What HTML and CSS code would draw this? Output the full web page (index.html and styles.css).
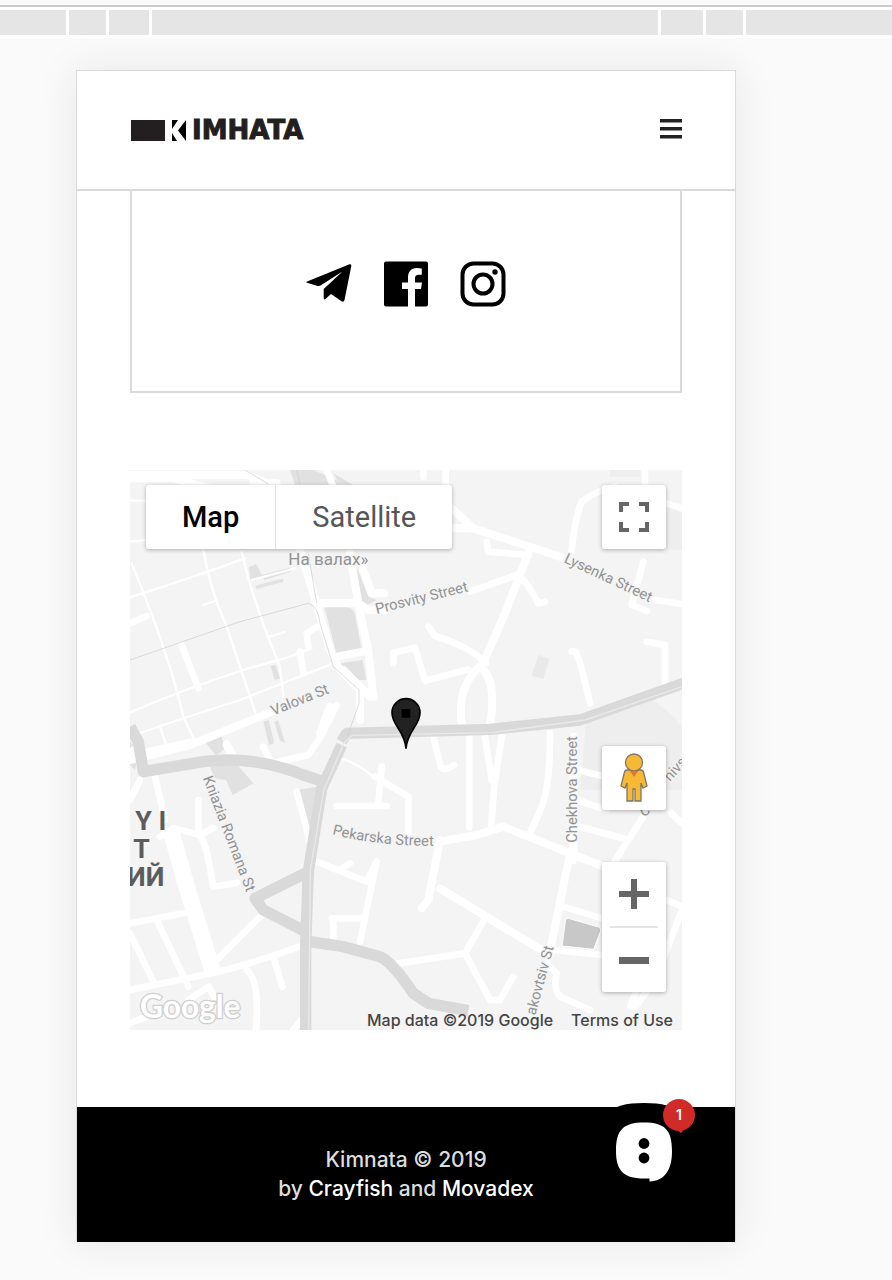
FILE: index.html
```html
<!DOCTYPE html>
<html lang="en">
<head>
<meta charset="utf-8">
<meta name="viewport" content="width=device-width, initial-scale=1">
<title>Kimnata</title>
<link rel="stylesheet" href="styles.css">
</head>
<body>
<div class="ruler"><span class="seg seg-a"></span><span class="seg seg-b"></span><span class="seg seg-c"></span><span class="seg seg-main"></span><span class="seg seg-d"></span><span class="seg seg-b"></span><span class="seg seg-e"></span></div>
<div class="stage">
<div class="device">
  <header class="header">
    <a class="logo" href="#" aria-label="Кімната">
      <svg class="logo-mark" viewBox="0 0 55 21" width="55" height="21" aria-hidden="true">
        <path fill="#231f20" d="M0 0h34v21H0z"/>
        <path fill="#000" d="M41 0h6l-6 9zM41 13l5 8h-5zM55 0v21L47 10.500z"/>
      </svg>
      <span class="logo-text">IMHATA</span>
    </a>
    <button class="menu" aria-label="Menu">
      <svg viewBox="0 0 22 20" width="22" height="20"><path fill="#222" d="M0 0h22v3.500H0zM0 8h22v3.500H0zM0 16h22v3.500H0z"/></svg>
    </button>
  </header>
  <main class="main">
    <nav class="social" aria-label="Social networks">
      <a href="#" aria-label="Telegram"><svg viewBox="0 0 46 46" width="46" height="46"><path d="M.500 20.800 43.500 3.300q2-.600 1.800 1.600L38.500 39q-.600 2.600-3 1.300l-10.500-7.200-5.500 5q-1.800 1.200-1.800-1.500v-8.500L36.500 10.500 14.500 24.600q-1.500.800-3 .300L1 21.800q-1-.400-.500-1z"/></svg></a>
      <a href="#" aria-label="Facebook"><svg viewBox="0 0 46 46" width="46" height="46"><path d="M3 .500h40q2 0 2 2v41q0 2-2 2H32V28h6l1-6.500h-7v-4c0-2.500 1.200-3.700 3.800-3.700h3V7.500q-2-.500-5-.500C28 7 25 11 25 16.500v5h-6V28h6v17.500H3q-2 0-2-2v-41q0-2 2-2z"/></svg></a>
      <a href="#" aria-label="Instagram"><svg viewBox="0 0 46 46" width="46" height="46"><g fill="none" stroke="#000" stroke-width="4"><rect x="2.500" y="2.500" width="41" height="41" rx="11"/><circle cx="23" cy="23" r="9.500"/></g><circle cx="35" cy="11" r="2.700"/></svg></a>
    </nav>
    <section class="map" aria-label="Map">
      <svg class="map-canvas" viewBox="0 0 1656 1680" preserveAspectRatio="xMidYMid slice">
        <defs><path id="pekarska" d="M606 1093Q750 1131 950 1127"/></defs>
        <path fill="#f4f4f4" d="M0 0h1656v1680H0z"/>
        <!-- blocks and squares -->
        <path fill="#eee" d="M1370 735 1560 685Q1640 740 1656 775V960H1350z M1610 100l46 30v110h-46z M1440 0h90v20h-90z"/>
        <g fill="#e1e1e1">
          <path d="M480 0h70l100 45H495zM610 10l60 35h-40z"/>
          <path d="M583 410h68q22 5 25 30l19 100-75 13zM630 580l68-10 10 60h-50l-25-30z"/>
          <path d="M680 290l35 90 25 10-35 18-20-20zM357 292l22-10 20 40-38 12zM395 315l80-22 8 12-80 25zM375 347l85-22v10l-80 22z"/>
          <path d="M422 588l14-4 14 42-16 4zM400 755l16-5 17 70-16 5zM433 755l12-4 20 68-16-8zM225 815l50-18 8 40-25 20z"/>
          <path d="M240 890l80-8 50 58-62 35-20-45-35-5zM500 960l62-10-8 165-30-45z"/>
          <path d="M0 815l25 25-10 60-15-15z"/>
        </g>
        <path fill="#e9e9e9" d="M1225 555l33 12-18 60-35-10z"/>
        <path fill="#c8c8c8" stroke="#fff" stroke-width="3" d="M1315 1345q-8 0-9 8l-10 75 95 10 21-55q2-9-6-12z"/>
        <g class="road thin">
          <path d="M0 382Q180 325 345 265M5 280Q120 560 160 740L200 825M220 240Q240 360 290 470L380 740M335 245Q370 400 450 590L460 680M0 727Q170 655 340 600L480 560 545 535M0 800Q170 740 330 690L610 580M0 215l50-5M0 92h50M220 405l35-12M420 500l45-14M90 770l20 60M365 330l130-35M600 860q80 10 140 70"/>
        </g>
        <g class="road">
          <path d="M0 460l50-22M155 525l50 130M510 545l10 65M535 530l-5-40 30-20"/>
          <path d="M90 1100l40-25 80 20 40-20M205 990v90l25 60 20 110 70-12M0 1360l160-30M0 1390l75 155M85 1360l90 190M245 1485l155-155M0 1560l220-45q140-30 300-90M430 1460l27 90M350 1500q40 30 28 180M175 1590l60-40 40 70M0 1660l60-25M490 1680l40-50M75 920l30 130M30 930l-30 60"/>
          <path d="M30 850l150-35M290 820l20 35M400 830l25 50 110-25 40-60 45-90"/>
          <path d="M790 580V548l65-15 30 100 130-35M895 470l20 28Q1020 530 1068 580M1175 325q20 20 50 75l20-5M1070 215l5 30 120 10M1325 545l10 0q10 0 45 155M1550 515l55 10v115M1540 275l-35 130 45 18M1020 365l140-50"/>
          <path d="M910 800l22 90q12 15 40-5M1018 800v270M1065 800l20 130M1115 800l-22 145-10 130M1260 790q0 160-25 220l-35 80M620 1008h150M745 1000l10-110M1345 900l80 20M1340 990l90 30M1350 1070l130 35"/>
          <path d="M560 1175l150 60 30-60-50 240M630 1200l30-20M605 1345h90M610 1350v65M735 920l100 60v110M805 1480l200-30 60-105M1005 1450l75 140h30l40-70M1250 1480l30 30q-10 50 10 70l90 40M500 965l40 150"/>
          <path d="M1300 1310l200 60M1270 1440l150 15M1610 1290l46 20M1656 1320l-80 210-60 80M1500 1610l20-50M1540 1040l-90 140M1625 1030l31 30"/>
          <path d="M1325 240q10-100 30-145 45-35 100-45M1545 0v50M1610 100l46 15M1575 390l81 12M590 0l20 50M880 0v20M947 0v50"/>
        </g>
        <g class="road wide">
          <path d="M0 25h130l160 45M0 15h350l90 35M510 240q50 160 90 300l30 60 60 60v90M640 600l80 80M660 250q30 190 55 290l15 140M565 400h120l30 20h50M620 560l80-15M700 300l25 70 38 0M0 850l30-25M0 870l180-45 210-85 60-25M290 825l20 40M600 710l-30 80M440 40h-70"/>
          <path d="M960 110l70 65 260 85M970 175h50M1195 250l-70 180-70 160M1055 585q-75 60-60 175M1060 600q40 40 20 165M930 1115l110-20 80-25 200 80 150 60M930 1110l-35 180-20 25M1320 1150l-55 270M1330 800v370M930 1255l180 110 150 90"/>
        </g>
        <path class="boulevard" d="M120 1075l50 175 80 260"/>
        <g class="main-road">
          <path d="M0 770l25 45 15 90 180-30q150-20 300 40l60 20M635 825l-60 130-40 250-8 220v260M635 815l15-25 430-12 270-28 310-110M525 1210l-150 75 25 35 127 65M540 1415l100 15 110 30q40 20 100 110l45 30 120 22"/>
        </g>
        <path fill="none" stroke="#e9e9e9" stroke-width="4" d="M1656 650l-290 100-280 38-420 8-25 25-60 140-40 240-5 480"/>
        <path fill="none" stroke="#ccc" stroke-width="2" d="M0 570l330-115 205-55q30 10 35 60l40 130 77 70v40l-35 100M535 250l25 150M345 0l70 42M500 0l10 42"/>
        <g class="label">
          <text x="475" y="285" font-size="51">На валах»</text>
          <text transform="translate(740 432) rotate(-14)">Prosvity Street</text>
          <text transform="translate(1300 276) rotate(25)">Lysenka Street</text>
          <text transform="translate(430 737) rotate(-22)">Valova St</text>
          <text transform="translate(218 924) rotate(69)">Kniazia Romana St</text>
          <text><textPath href="#pekarska">Pekarska Street</textPath></text>
          <text transform="translate(1342 1118) rotate(-90)">Chekhova Street</text>
          <text transform="translate(1216 1637) rotate(-75)">akovtsiv St</text>
          <text transform="translate(1620 936) rotate(-48)">nivs</text>
          <text transform="translate(1536 1040) rotate(-20)">C</text>
        </g>
        <g class="district">
          <text x="16" y="1081">Y I</text>
          <text x="10" y="1164">T</text>
          <text x="103" y="1248" text-anchor="end">ИЙ</text>
        </g>
        <text class="google" x="30" y="1644">Google</text>
        <g transform="translate(828 684)">
          <path fill="#222" stroke="#000" stroke-width="5" d="M0 152C-3 100-42 82-42 44A42 42 0 0 1 42 44C42 82 3 100 0 152z"/>
          <path d="M-13 33h26v26h-26z"/>
        </g>
      </svg>
      <div class="map-types">
        <button class="map-type is-active">Map</button>
        <button class="map-type">Satellite</button>
      </div>
      <div class="map-controls">
        <button class="control" aria-label="Toggle fullscreen view"><svg viewBox="0 0 30 30" width="30" height="30"><path fill="none" stroke="#666" stroke-width="4" d="M2 10V2h8M20 2h8v8M28 20v8h-8M10 28H2v-8"/></svg></button>
        <button class="control pegman" aria-label="Street View"><svg viewBox="0 0 28 50" width="28" height="50"><g fill="#f5b935" stroke="#807566" stroke-width="1.300"><path d="M7 17h14q2 0 2.500 2L27 33l-4 2-2-5v18h-6V36h-2v12H7V30l-2 5-4-2 3.500-14Q5 17 7 17z"/><circle cx="14" cy="9.500" r="8.500"/></g><path fill="#e47635" d="M9 17q5 2.500 10 0l-5 7z"/></svg></button>
        <div class="zoom">
          <button class="control flat" aria-label="Zoom in"><svg viewBox="0 0 30 30" width="30" height="30"><path fill="#666" d="M12 0h6v12h12v6H18v12h-6V18H0v-6h12z"/></svg></button>
          <span class="zoom-line"></span>
          <button class="control flat" aria-label="Zoom out"><svg viewBox="0 0 30 30" width="30" height="30"><path fill="#666" d="M0 12h30v7H0z"/></svg></button>
        </div>
      </div>
      <div class="map-credits"><span>Map data ©2019 Google</span><a href="#">Terms of Use</a></div>
    </section>
  </main>
  <footer class="footer">
    <p>Kimnata © 2019</p>
    <p>by <a href="#">Crayfish</a> and <a href="#">Movadex</a></p>
    <button class="chat" aria-label="Open chat, 1 new message">
      <svg viewBox="0 0 96 96" width="96" height="96"><path d="M48 0C84 0 96 12 96 48S84 96 48 96 0 84 0 48 12 0 48 0z"/><path fill="#fff" d="M48 19.500C69 19.500 76 27 76 48 76 68 68 78 53.500 78.500V75.500H48C27 75.500 20 67 20 48 20 27 27 19.500 48 19.500z"/><circle cx="48" cy="40.500" r="5.400"/><circle cx="48" cy="55" r="5.400"/></svg>
      <svg class="badge-shape" viewBox="0 0 32 35" width="32" height="35"><circle cx="16" cy="16" r="16" fill="#d02b28"/><path fill="#d02b28" d="M11 30q5 1 7 4.500 2-2 3-6z"/></svg>
      <span class="badge">1</span>
    </button>
  </footer>
</div>
</div>
</body>
</html>
```
FILE: styles.css
```css
* { box-sizing: border-box; }
body { margin: 0; padding-top: 5px; background: #fafafa; font-family: Inter, "Noto Sans", sans-serif; }
a { color: inherit; text-decoration: none; }
button { padding: 0; border: 0; background: none; color: inherit; font: inherit; cursor: pointer; }
svg { display: block; }

.ruler { display: flex; gap: 3px; height: 33px; padding: 3px 0; border-top: 2px solid #cbcbcb; background: #fff; }
.seg { background: #e5e5e5; }
.seg-a { width: 66px; }
.seg-b { width: 37px; }
.seg-c { width: 40px; }
.seg-d { width: 42px; }
.seg-e { width: 146px; }
.seg-main { flex: 1; }

.stage { padding: 32px 156px 38px 76px; }
.device { border: 1px solid #dadada; border-bottom: 0; background: #fff; box-shadow: 0 0 40px rgba(0, 0, 0, .08); }

.header { display: flex; align-items: center; justify-content: space-between; height: 120px; padding: 0 53px 0 54px; border-bottom: 2px solid #dadada; }
.logo { display: flex; align-items: center; gap: 6px; }
.logo-text { color: #231f20; font-family: "DejaVu Sans", sans-serif; font-size: 26px; font-weight: 700; line-height: 30px; -webkit-text-stroke: 1px #231f20; }
.menu { padding-bottom: 2px; }

.main { padding: 0 53px 77px; }
.social { display: flex; justify-content: center; gap: 31px; padding: 70px 0 84px; border: 2px solid #dadada; border-top: 0; }

.map { position: relative; margin-top: 77px; overflow: hidden; }
.map-canvas { width: 100%; height: auto; }
.road { fill: none; stroke: #fff; stroke-width: 20; stroke-linecap: round; stroke-linejoin: round; }
.thin { stroke-width: 7; }
.wide { stroke-width: 24; }
.boulevard { fill: none; stroke: #fff; stroke-width: 50; }
.main-road { fill: none; stroke: #d9d9d9; stroke-width: 34; stroke-linejoin: round; }
.label { fill: #929292; stroke: #f4f4f4; stroke-width: 6; paint-order: stroke; font-family: Roboto, sans-serif; font-size: 44px; }
.district { fill: #5c5c5c; font-family: Roboto, sans-serif; font-size: 80px; font-weight: 700; }
.google { fill: #fff; stroke: #d0d0d0; stroke-width: 8; paint-order: stroke; font-family: Lato, sans-serif; font-size: 95px; font-weight: 700; }

.map-types { position: absolute; top: 15px; left: 16px; display: flex; border-radius: 3px; background: #fff; box-shadow: 0 1px 4px rgba(0, 0, 0, .3); }
.map-type { height: 64px; padding: 0 36px; color: #565656; font-family: Roboto, sans-serif; font-size: 29px; }
.map-type + .map-type { border-left: 1px solid #e2e2e2; }
.map-type.is-active { color: #000; font-weight: 500; }

.map-controls { position: absolute; top: 15px; right: 16px; bottom: 38px; display: flex; flex-direction: column; }
.control { display: flex; align-items: center; justify-content: center; width: 64px; height: 64px; border-radius: 3px; background: #fff; box-shadow: 0 1px 4px rgba(0, 0, 0, .3); }
.pegman { margin: auto 0 52px; }
.zoom { border-radius: 3px; background: #fff; box-shadow: 0 1px 4px rgba(0, 0, 0, .3); }
.flat { box-shadow: none; }
.zoom-line { display: block; height: 2px; margin: 0 8px; background: #e4e4e4; }
.map-credits { position: absolute; right: 9px; bottom: 0; display: flex; gap: 18px; color: #444; font-size: 16px; font-weight: 500; line-height: 20px; white-space: nowrap; }

.footer { position: relative; padding: 38px 0 39px; background: #000; color: #ddd; font-size: 21px; font-weight: 500; line-height: 29px; text-align: center; }
.footer p { margin: 0; }
.footer a { color: #fff; }
.chat { position: absolute; top: -4px; right: 43px; }
.badge-shape { position: absolute; top: -4px; right: -3px; }
.badge { position: absolute; top: -4px; right: -3px; width: 32px; color: #fff; font-size: 14px; font-weight: 600; line-height: 32px; text-align: center; }
```
